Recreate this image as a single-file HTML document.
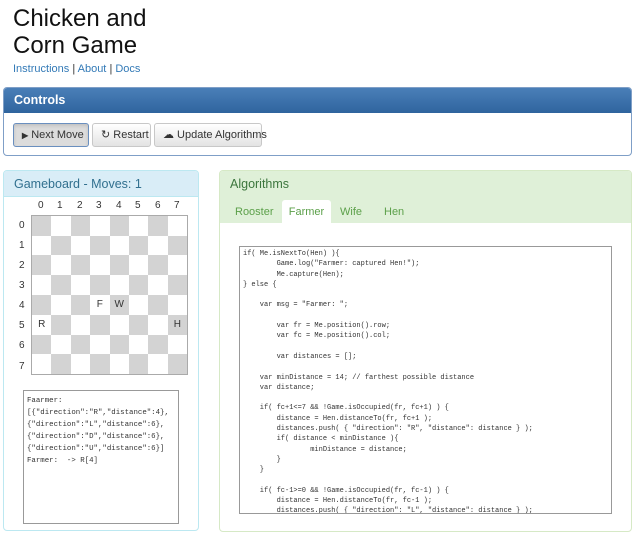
<!DOCTYPE html>
<html><head><meta charset="utf-8"><style>
*{box-sizing:border-box}
body{margin:0;width:640px;height:545px;overflow:hidden;background:#fff;font-family:"Liberation Sans",sans-serif;color:#333;position:relative}
.abs{position:absolute}
h1{position:absolute;left:13px;top:5px;margin:0;font-weight:normal;font-size:24px;line-height:27px;color:#111}
.links{left:13px;top:63px;font-size:11px;color:#337ab7}
.links span{color:#333}
.panel{position:absolute;border:1px solid;border-radius:4px;overflow:hidden}
.ph{height:26px;padding:0 10px;line-height:26px;font-size:12.5px}
.btn{position:absolute;top:123px;height:24px;border:1px solid #c8c8c8;border-radius:3px;background:linear-gradient(#fff,#e3e3e3);font-size:11px;line-height:22px;padding-left:8px;color:#333;white-space:nowrap}
.board{position:absolute;left:31px;top:215px;width:157px;height:160px;border:1px solid #aaa;display:grid;grid-template-columns:repeat(8,1fr);grid-template-rows:repeat(8,1fr)}
.board div{font-size:10px;text-align:center;line-height:20px;color:#333}
.g{background:#d3d3d3}
.cl{font-size:10px;color:#333;position:absolute}
pre{margin:0;font-family:"Liberation Mono",monospace;color:#333}
</style></head><body>
<h1>Chicken and<br>Corn Game</h1>
<div class="abs links">Instructions <span>|</span> About <span>|</span> Docs</div>

<div class="panel" style="left:3px;top:87px;width:629px;height:69px;border-color:#7f9fc7">
<div class="ph" style="background:linear-gradient(#4a7fb8,#2f649e);color:#fff;font-weight:bold;height:25px;line-height:25px">Controls</div>
</div>
<div class="btn" style="left:13px;width:76px;background:#dcdcdc;border-color:#6a8fbf;box-shadow:inset 0 2px 3px rgba(0,0,0,.12)"><b style="font-size:8px">▶</b> Next Move</div>
<div class="btn" style="left:92px;width:59px">↻ Restart</div>
<div class="btn" style="left:154px;width:108px">☁ Update Algorithms</div>

<div class="panel" style="left:3px;top:170px;width:196px;height:361px;border-color:#bce8f1">
<div class="ph" style="background:#d9edf7;color:#31708f;border-bottom:1px solid #bce8f1">Gameboard - Moves: 1</div>
</div>
<div class="board">
<div class="g"></div><div></div><div class="g"></div><div></div><div class="g"></div><div></div><div class="g"></div><div></div>
<div></div><div class="g"></div><div></div><div class="g"></div><div></div><div class="g"></div><div></div><div class="g"></div>
<div class="g"></div><div></div><div class="g"></div><div></div><div class="g"></div><div></div><div class="g"></div><div></div>
<div></div><div class="g"></div><div></div><div class="g"></div><div></div><div class="g"></div><div></div><div class="g"></div>
<div class="g"></div><div></div><div class="g"></div><div>F</div><div class="g">W</div><div></div><div class="g"></div><div></div>
<div>R</div><div class="g"></div><div></div><div class="g"></div><div></div><div class="g"></div><div></div><div class="g">H</div>
<div class="g"></div><div></div><div class="g"></div><div></div><div class="g"></div><div></div><div class="g"></div><div></div>
<div></div><div class="g"></div><div></div><div class="g"></div><div></div><div class="g"></div><div></div><div class="g"></div>
</div>
<span class="cl" style="left:38px;top:200px">0</span><span class="cl" style="left:57px;top:200px">1</span><span class="cl" style="left:77px;top:200px">2</span><span class="cl" style="left:96px;top:200px">3</span><span class="cl" style="left:116px;top:200px">4</span><span class="cl" style="left:135px;top:200px">5</span><span class="cl" style="left:155px;top:200px">6</span><span class="cl" style="left:174px;top:200px">7</span>
<span class="cl" style="left:19px;top:220px">0</span><span class="cl" style="left:19px;top:240px">1</span><span class="cl" style="left:19px;top:260px">2</span><span class="cl" style="left:19px;top:280px">3</span><span class="cl" style="left:19px;top:300px">4</span><span class="cl" style="left:19px;top:320px">5</span><span class="cl" style="left:19px;top:340px">6</span><span class="cl" style="left:19px;top:361px">7</span>

<div class="abs" style="left:23px;top:390px;width:156px;height:134px;border:1px solid #999;padding:4px 3px">
<pre style="font-size:7.4px;line-height:12px">Faarmer:
[{"direction":"R","distance":4},
{"direction":"L","distance":6},
{"direction":"D","distance":6},
{"direction":"U","distance":6}]
Farmer:  -> R[4]</pre></div>

<div class="panel" style="left:219px;top:170px;width:413px;height:362px;border-color:#d6e9c6">
<div class="ph" style="background:#dff0d8;color:#3c763d;height:27px;line-height:27px">Algorithms</div>
<div style="background:#dff0d8;height:25px;position:relative;font-size:11px;color:#5ca04a">
<span class="abs" style="left:15px;top:8px">Rooster</span>
<span class="abs" style="left:62px;top:2px;width:49px;height:23px;background:#fff;border-radius:3px 3px 0 0;text-align:center;line-height:24px">Farmer</span>
<span class="abs" style="left:120px;top:8px">Wife</span>
<span class="abs" style="left:164px;top:8px">Hen</span>
</div>
</div>

<div class="abs" style="left:239px;top:246px;width:373px;height:268px;border:1px solid #999;overflow:hidden;padding:2px 3px">
<pre style="font-size:7px;line-height:10.3px">if( Me.isNextTo(Hen) ){
        Game.log("Farmer: captured Hen!");
        Me.capture(Hen);
} else {

    var msg = "Farmer: ";

        var fr = Me.position().row;
        var fc = Me.position().col;

        var distances = [];

    var minDistance = 14; // farthest possible distance
    var distance;

    if( fc+1<=7 && !Game.isOccupied(fr, fc+1) ) {
        distance = Hen.distanceTo(fr, fc+1 );
        distances.push( { "direction": "R", "distance": distance } );
        if( distance < minDistance ){
                minDistance = distance;
        }
    }

    if( fc-1>=0 && !Game.isOccupied(fr, fc-1) ) {
        distance = Hen.distanceTo(fr, fc-1 );
        distances.push( { "direction": "L", "distance": distance } );
        if( distance < minDistance ){</pre></div>
</body></html>
